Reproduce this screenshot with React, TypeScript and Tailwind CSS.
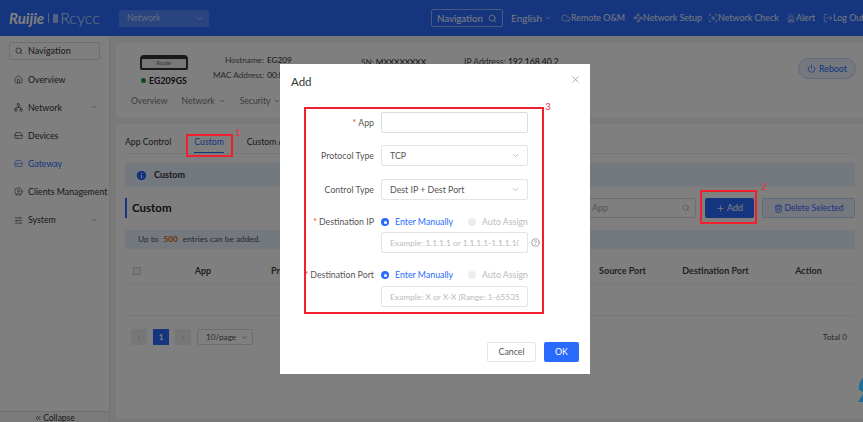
import {
  ChevronDown,
  ChevronLeft,
  ChevronRight,
  ChevronsLeft,
  CircleHelp,
  CircleUser,
  Cloud,
  HardDrive,
  House,
  Info,
  LogOut,
  Network,
  Plus,
  Power,
  ScanSearch,
  Search,
  Siren,
  SlidersHorizontal,
  Trash2,
  Waypoints,
} from "lucide-react";

const sideItems = [
  { label: "Overview", icon: House },
  { label: "Network", icon: Network, more: true },
  { label: "Devices", icon: HardDrive },
  { label: "Gateway", icon: HardDrive, active: true },
  { label: "Clients Management", icon: CircleUser },
  { label: "System", icon: SlidersHorizontal, more: true },
];

const headerLinks = [
  { label: "Remote O&M", icon: Cloud, cls: "w-[72px]" },
  { label: "Network Setup", icon: Waypoints, cls: "w-[75px]" },
  { label: "Network Check", icon: ScanSearch, cls: "w-[78px]" },
  { label: "Alert", icon: Siren, cls: "w-[37px]" },
  { label: "Log Out", icon: LogOut, cls: "w-[40px]" },
];

function Header() {
  return (
    <header className="flex h-[36px] items-center bg-[#2a6bfe] text-white">
      <div className="ml-[9px] flex w-[110px] shrink-0 items-center">
        <span className="text-[15px] font-bold italic">Ruijie</span>
        <span className="mx-[4px] h-[10px] w-px bg-white/60" />
        <span className="mr-[2px] h-[9px] w-[5px] rounded-[1px] bg-white/60" />
        <span className="text-[16px] font-light text-white/80">Rcycc</span>
      </div>
      <div className="flex h-[17px] w-[90px] shrink-0 items-center justify-between rounded-[2px] bg-white/20 pl-[8px] pr-[5px] text-[8.7px] text-white/70">
        Network <ChevronDown size={9} />
      </div>
      <div className="ml-[222px] flex h-[18px] w-[72px] shrink-0 items-center justify-between rounded-[2px] border border-white/50 px-[5px] text-[9.7px]">
        Navigation <Search size={9} />
      </div>
      <div className="ml-[8px] flex w-[50px] shrink-0 items-center gap-[2px] text-[10px] text-white/90">
        English <ChevronDown size={8} />
      </div>
      {headerLinks.map((l) => (
        <div key={l.label} className={`flex shrink-0 items-center whitespace-nowrap text-[8.9px] text-white/90 ${l.cls}`}>
          <l.icon size={10} strokeWidth={1.5} className="shrink-0" />
          {l.label}
        </div>
      ))}
    </header>
  );
}

function Sidebar() {
  return (
    <aside className="flex h-[386px] w-[110px] shrink-0 flex-col border-r border-[#e8e8e8] bg-white">
      <div className="mx-[9px] mt-[6px] flex h-[18px] items-center gap-[5px] rounded-[2px] border border-[#dcdcdc] pl-[5px] text-[9px] text-[#333]">
        <Search size={8} /> Navigation
      </div>
      <nav className="mt-[5px] flex-1">
        {sideItems.map((it) => (
          <div
            key={it.label}
            className={`flex h-[28.2px] items-center gap-[5px] whitespace-nowrap pl-[14px] text-[8.8px] ${it.active ? "text-[#2a6bfe]" : "text-[#333]"}`}
          >
            <it.icon size={9} strokeWidth={1.5} className="shrink-0" />
            {it.label}
            {it.more && <ChevronDown size={8} className="ml-auto mr-[11px] text-[#999]" />}
          </div>
        ))}
      </nav>
      <div className="flex h-[11px] items-start justify-center gap-px border-t border-[#ddd] bg-[#f5f5f5] text-[8.5px] leading-[12px] text-[#333]">
        <ChevronsLeft size={8} className="mt-[2px]" /> Collapse
      </div>
    </aside>
  );
}

function DeviceCard() {
  return (
    <section className="relative flex h-[75px] flex-col rounded-[2px] bg-white">
      <div className="flex h-[52px]">
        <div className="ml-[24px] mt-[12px] flex w-[48px] shrink-0 flex-col items-center">
          <div className="flex h-[15px] w-[48px] items-center justify-center rounded-[2px] rounded-t-[4px] border-[2px] border-t-[4px] border-[#333] bg-[#eee] text-[5px] text-[#666]">
            Router
          </div>
          <div className="mt-[4px] flex items-center gap-[3px] whitespace-nowrap text-[8.8px] font-bold text-[#222]">
            <span className="h-[5px] w-[5px] rounded-full bg-[#1a9c3e]" /> EG209GS
          </div>
        </div>
        <div className="ml-[25px] mt-[11px] flex flex-col gap-[3px] text-[8.2px] text-[#555]">
          <div className="flex gap-[3px] pl-[12px]">
            Hostname: <span className="text-[#222]">EG209</span>
          </div>
          <div className="flex gap-[3px]">
            MAC Address: <span className="text-[#222]">00:D0:F8:22:33:44</span>
          </div>
        </div>
      </div>
      <div className="flex items-center text-[8.6px] text-[#777]">
        <span className="ml-[15px]">Overview</span>
        <span className="ml-[14px] flex items-center gap-[3px]">
          Network <ChevronDown size={8} />
        </span>
        <span className="ml-[14px] flex items-center gap-[3px]">
          Security <ChevronDown size={8} />
        </span>
      </div>
      <div className="absolute left-[245px] top-[13px] whitespace-nowrap text-[8.2px] text-[#555]">
        SN: <span className="text-[#222]">MXXXXXXXX</span>
      </div>
      <div className="absolute left-[348px] top-[13px] whitespace-nowrap text-[8.6px] text-[#555]">
        IP Address: <span className="text-[#222]">192.168.40.2</span>
      </div>
      <button className="absolute right-[8px] top-[15px] flex h-[21px] w-[58px] items-center justify-center gap-[3px] rounded-full border border-[#c3d4f8] bg-[#eaf0fe] text-[8.8px] text-[#2a6bfe]">
        <Power size={9} /> Reboot
      </button>
    </section>
  );
}

function RuleTable() {
  const cols = ["App", "Protocol Type", "Control Type", "Destination IP", "Source Port", "Destination Port", "Action"];
  return (
    <div className="mt-[8px] border-b border-[#eee] pb-[30px]">
      <div className="grid h-[28px] grid-cols-[38px_80px_111px_111px_111px_93px_93px_93px] items-center border-b border-[#f0f0f0] text-[9px] font-bold text-[#444]">
        <span className="ml-[8px] h-[8px] w-[8px] rounded-[1px] border border-[#ccc] bg-[#f5f5f5]" />
        {cols.map((c) => (
          <span key={c} className="text-center">
            {c}
          </span>
        ))}
      </div>
    </div>
  );
}

function GatewayCard() {
  return (
    <section className="mt-[6px] h-[294px] rounded-[2px] bg-white px-[9px]">
      <div className="flex h-[30px] items-end gap-[23px] border-b border-[#eee] pb-[4px] text-[8.7px] leading-[14px] text-[#333]">
        <span>App Control</span>
        <span className="relative text-[#2a6bfe]">
          Custom
          <span className="absolute -bottom-[4px] left-0 h-[1px] w-full bg-[#2a6bfe]" />
        </span>
        <span>Custom App</span>
      </div>
      <div className="mt-[9px] flex h-[24px] items-center gap-[6px] rounded-[2px] bg-[#e8f0fe] pl-[10px] text-[9px] font-bold text-[#333]">
        <Info size={13} className="fill-[#2a6bfe] text-white" /> Custom
      </div>
      <div className="mt-[11px] flex h-[20px] items-center">
        <h2 className="border-l-2 border-[#2a6bfe] pl-[5px] text-[11.5px] font-bold leading-[20px] text-[#222]">Custom</h2>
        <div className="ml-auto flex h-[20px] w-[110px] items-center justify-between rounded-[2px] border border-[#ddd] px-[5px] text-[9px] text-[#aaa]">
          App <Search size={8} />
        </div>
        <button className="ml-[9px] flex h-[20px] w-[49px] items-center justify-center gap-[2px] rounded-[2px] bg-[#2a6bfe] text-[9px] text-white">
          <Plus size={9} /> Add
        </button>
        <button className="ml-[8px] flex h-[20px] w-[93px] items-center justify-center gap-[2px] rounded-[2px] border border-[#c3d4f8] bg-[#eaf0fe] text-[8.5px] text-[#2a6bfe]">
          <Trash2 size={9} /> Delete Selected
        </button>
      </div>
      <div className="mt-[12px] flex h-[19px] items-center gap-[5px] rounded-[2px] bg-[#e8f0fe] pl-[13px] text-[8.3px] text-[#555]">
        Up to <b className="text-[#e06a00]">500</b> entries can be added.
      </div>
      <RuleTable />
      <div className="mt-[13px] flex h-[16px] items-center text-[8.2px] text-[#555]">
        <span className="ml-[6px] flex h-[16px] w-[16px] items-center justify-center bg-[#eee] text-[#bbb]">
          <ChevronLeft size={8} />
        </span>
        <span className="ml-[6px] flex h-[16px] w-[16px] items-center justify-center bg-[#2a6bfe] font-bold text-white">1</span>
        <span className="ml-[6px] flex h-[16px] w-[16px] items-center justify-center bg-[#eee] text-[#bbb]">
          <ChevronRight size={8} />
        </span>
        <span className="ml-[6px] flex h-[16px] w-[56px] items-center justify-between rounded-[2px] border border-[#ddd] pl-[8px] pr-[4px]">
          10/page <ChevronDown size={7} />
        </span>
        <span className="ml-auto mr-[8px]">Total 0</span>
      </div>
    </section>
  );
}

function FormRow({ label, required, children }: { label: string; required?: boolean; children: React.ReactNode }) {
  return (
    <div className="flex min-h-[14px] items-center">
      <label className="w-[77px] shrink-0 whitespace-nowrap pr-[7px] text-right text-[8.8px] leading-[14px] text-[#555]">
        {required && <span className="mr-[2px] text-[#f04040]">*</span>}
        {label}
      </label>
      {children}
    </div>
  );
}

function SelectBox({ value }: { value: string }) {
  return (
    <div className="flex h-[21px] w-[147px] items-center justify-between rounded-[2px] border border-[#e4e4e4] pl-[8px] pr-[7px] text-[8.8px] text-[#555]">
      {value} <ChevronDown size={9} className="text-[#aaa]" />
    </div>
  );
}

function RadioPair() {
  return (
    <div className="flex items-center whitespace-nowrap text-[8.8px] leading-[14px]">
      <span className="flex h-[8px] w-[8px] items-center justify-center rounded-full bg-[#2a6bfe]">
        <span className="h-[3px] w-[3px] rounded-full bg-white" />
      </span>
      <span className="ml-[6px] w-[57px] text-[#2a6bfe]">Enter Manually</span>
      <span className="ml-[16px] h-[8px] w-[8px] rounded-full bg-[#ececec]" />
      <span className="ml-[6px] text-[#bbb]">Auto Assign</span>
    </div>
  );
}

function HintInput({ hint, cls }: { hint: string; cls: string }) {
  return (
    <input
      readOnly
      placeholder={hint}
      className={`ml-[77px] block h-[21px] w-[147px] rounded-[2px] border border-[#e4e4e4] px-[8px] text-[8.4px] placeholder:text-[#bbb] ${cls}`}
    />
  );
}

function Marker({ n, cls }: { n: number; cls: string }) {
  return <span className={`absolute z-20 text-[10px] text-[#f03040] ${cls}`}>{n}</span>;
}

function AddDialog() {
  return (
    <div className="relative ml-[7px] flex h-[310px] w-[310px] flex-col bg-white px-[11px] pt-[9px]">
      <h3 className="text-[11.5px] leading-[18px] text-[#333]">Add</h3>
      <span className="absolute right-[11px] top-[12px] text-[#999]">
        <svg width="7" height="7" viewBox="0 0 7 7" stroke="currentColor" strokeWidth="0.8">
          <path d="M0.5 0.5l6 6M6.5 0.5l-6 6" />
        </svg>
      </span>
      <div className="ml-[13px] mt-[21px] flex flex-col">
        <FormRow label="App" required>
          <div className="h-[21px] w-[147px] rounded-[2px] border border-[#dcdcdc]" />
        </FormRow>
        <div className="mt-[12px]">
          <FormRow label="Protocol Type">
            <SelectBox value="TCP" />
          </FormRow>
        </div>
        <div className="mt-[13px]">
          <FormRow label="Control Type">
            <SelectBox value="Dest IP + Dest Port" />
          </FormRow>
        </div>
        <div className="mt-[15px]">
          <FormRow label="Destination IP" required>
            <RadioPair />
          </FormRow>
        </div>
        <div className="mt-[3px] flex items-center">
          <HintInput hint="Example: 1.1.1.1 or 1.1.1.1-1.1.1.10" cls="" />
          <CircleHelp size={9} className="ml-[3px] text-[#888]" />
        </div>
        <div className="mt-[15px]">
          <FormRow label="Destination Port" required>
            <RadioPair />
          </FormRow>
        </div>
        <HintInput hint="Example: X or X-X (Range: 1-65535)" cls="mt-[4px]" />
      </div>
      <div className="mt-[35px] flex justify-end gap-[8px]">
        <button className="h-[20px] w-[49px] rounded-[2px] border border-[#e4e4e4] text-[8.8px] text-[#555]">Cancel</button>
        <button className="h-[20px] w-[35px] rounded-[2px] bg-[#2a6bfe] text-[8.8px] text-white">OK</button>
      </div>
      {/* annotation box 3 */}
      <div className="absolute left-[24px] top-[43px] h-[207px] w-[240px] border-2 border-[#f02030]" />
      <Marker n={3} cls="left-[265px] top-[35px]" />
    </div>
  );
}

export default function App() {
  return (
    <div
      className="relative h-[422px] w-[863px] overflow-hidden bg-[#f2f3f5]"
      style={{ fontFamily: 'Lato, "Noto Sans", sans-serif' }}
    >
      <Header />
      <div className="flex">
        <Sidebar />
        <main className="flex-1 pl-[6px] pt-[7px]">
          <DeviceCard />
          <GatewayCard />
        </main>
      </div>

      <div className="absolute inset-0 flex items-start justify-center bg-black/50 pt-[64px]">
        <AddDialog />
      </div>

      {/* step annotations */}
      <div className="absolute left-[186px] top-[134px] h-[23px] w-[47px] border-2 border-[#f02030]" />
      <Marker n={1} cls="left-[235px] top-[125px]" />
      <div className="absolute left-[700px] top-[190px] h-[34px] w-[57px] border-2 border-[#f02030]" />
      <Marker n={2} cls="left-[761px] top-[179px]" />

      <svg className="absolute left-[857px] top-[378px]" width="6" height="24" viewBox="0 0 6 24">
        <path d="M6 0C3 3 1 8 2 12l4 2zM6 16L1 24h5z" fill="#1d6f96" />
      </svg>
    </div>
  );
}
